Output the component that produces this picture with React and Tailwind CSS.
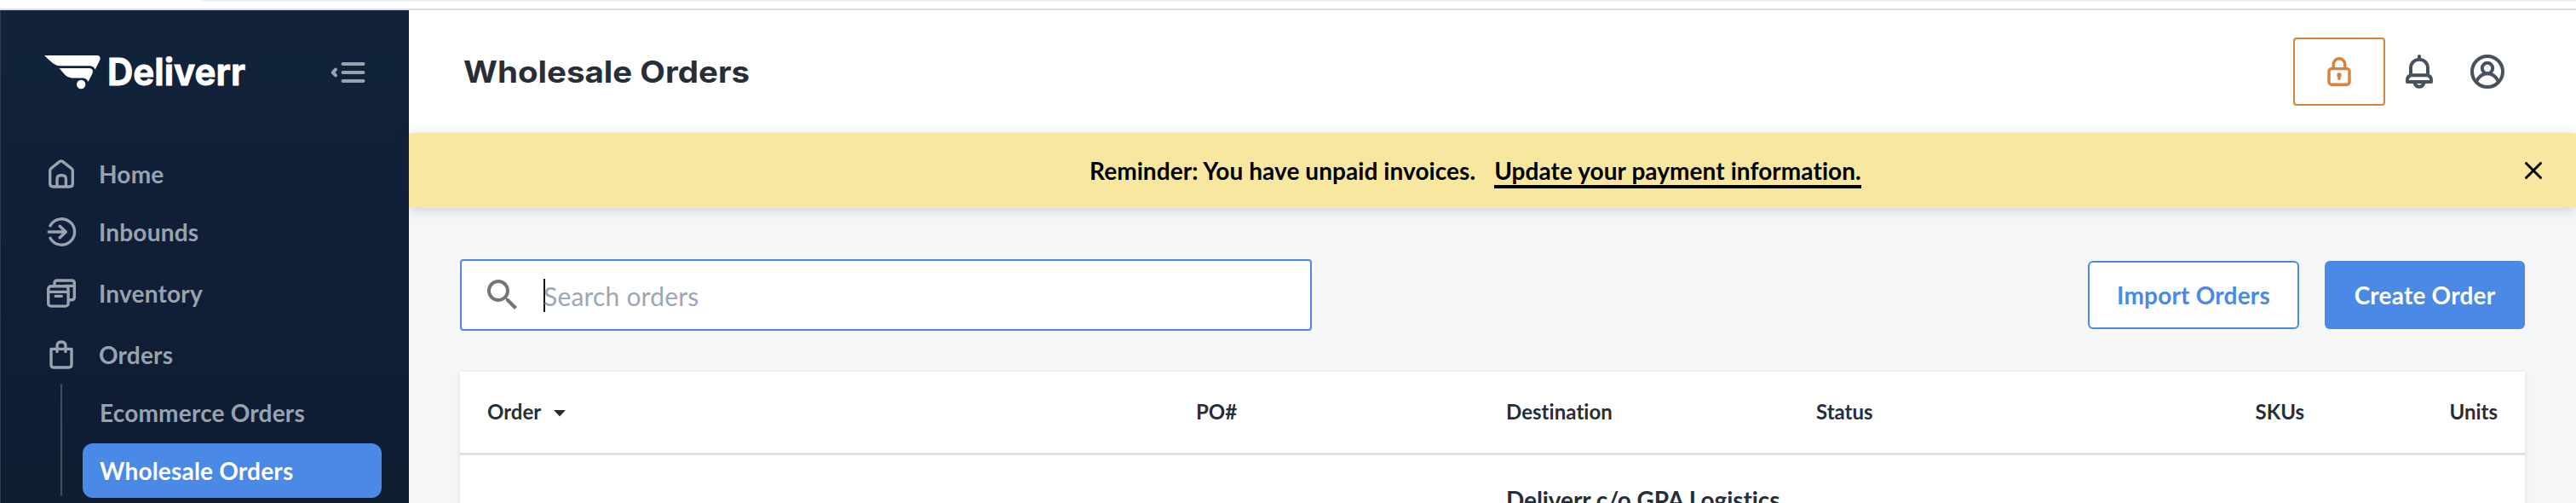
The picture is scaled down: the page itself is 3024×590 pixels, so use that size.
import React from 'react';

function Logo() {
    return (
        <svg className="overflow-visible" width="240" height="60" viewBox="0 -8 240 60" fill="#ffffff">
            <path d="M0 2H62Q66 2.2 65.6 6.5Q65.2 8 59.7 18.5Q58 14.6 54 14.2H19Q14 14.2 10.5 11.5Q6 8 0 2Z" />
            <path d="M17.5 17H53Q57.5 17.6 56.8 22Q56 24.5 51.5 33Q50 29 46 28.5H32Q27.5 28.2 24.5 25Z" />
            <circle cx="43.2" cy="36" r="5.2" />
            <text
                x="74"
                y="37"
                fontSize="44"
                fontWeight="700"
                fontFamily="Inter, sans-serif"
                textLength="162"
                lengthAdjust="spacingAndGlyphs"
                stroke="#ffffff"
                strokeWidth="0.8"
            >
                Deliverr
            </text>
        </svg>
    );
}

function NavIcon({ children }) {
    return (
        <svg
            className="h-10 w-10 shrink-0"
            viewBox="0 0 40 40"
            fill="none"
            stroke="currentColor"
            strokeWidth="3.4"
            strokeLinecap="round"
            strokeLinejoin="round"
        >
            {children}
        </svg>
    );
}

const navItems = [
    {
        label: 'Home',
        icon: (
            <>
                <path d="M6.7 16.2Q6.7 14.6 8 13.5L17.8 5.6Q19.8 4.2 21.8 5.6L31.8 13.5Q33.3 14.6 33.3 16.2V31.5Q33.3 35 29.8 35H10.2Q6.7 35 6.7 31.5Z" />
                <path d="M15 34.5V26Q15 21.7 19 21.7H21.2Q25.4 21.7 25.4 26V34.5" />
            </>
        ),
    },
    {
        label: 'Inbounds',
        icon: (
            <>
                <path d="M7 12.8A15.2 15.2 0 1 1 7 27.2" />
                <path d="M5.2 20H25M18.2 13.2L25.3 20L18.2 26.8" />
            </>
        ),
    },
    {
        label: 'Inventory',
        icon: (
            <>
                <rect x="4.7" y="11.7" width="23.4" height="23.4" rx="3.2" />
                <path d="M4.7 18.4H28M13.2 23.4H20.2" />
                <path d="M12 11V8Q12 5 15 5H32.2Q35.3 5 35.3 8V24.5Q35.3 27.8 31.5 27.8H28.5M25 11.4H35" />
            </>
        ),
    },
    {
        label: 'Orders',
        icon: (
            <>
                <path d="M8 13.4H32V31.8Q32 35 28.8 35H11.2Q8 35 8 31.8Z" />
                <path d="M15 16.5V10Q15 5 20 5Q25 5 25 10V16.5" />
            </>
        ),
    },
];

function Sidebar() {
    return (
        <aside className="w-[480px] shrink-0 border-l border-[#2b3b50] bg-linear-to-b from-[#11233b] via-[#101e37] to-[#0f1d33] font-bold text-[#98a3af]">
            <div className="flex h-[144px] items-center pt-px pr-[51px] pl-[51px]">
                <Logo />
                <svg
                    className="ml-auto"
                    width="42"
                    height="26"
                    viewBox="0 0 42 26"
                    fill="none"
                    stroke="currentColor"
                    strokeWidth="4"
                    strokeLinecap="round"
                    strokeLinejoin="round"
                >
                    <path d="M15.5 3H39.5M15.5 13H39.5M15.5 23H39.5M7 9.7L3.7 13L7 16.3" />
                </svg>
            </div>

            <nav className="pt-[14px] pl-[51px] text-[28px] leading-[68px] tracking-[0.2px]">
                {navItems.map((item, i) => (
                    <div key={item.label} className={i > 1 ? 'mt-1 flex h-[68px] items-center' : 'flex h-[68px] items-center'}>
                        <NavIcon>{item.icon}</NavIcon>
                        <span className="ml-6">{item.label}</span>
                    </div>
                ))}

                {/* Orders submenu */}
                <div className="mt-[2px] ml-[19px] h-[132px] border-l-2 border-[#414c5e] pr-8 pl-6 text-[28px]">
                    <div className="-mt-[2px] pl-5">Ecommerce Orders</div>
                    <div className="mt-[2px] h-16 rounded-xl bg-[#4a89e6] pl-5 leading-[64px] text-white">
                        Wholesale Orders
                    </div>
                </div>
            </nav>
        </aside>
    );
}

function Header() {
    return (
        <header className="flex h-[144px] items-center bg-white pr-[84px] pl-16">
            <h1 className="origin-left scale-x-110 font-[Inter,sans-serif] text-[35px] font-bold text-[#272e37]">
                Wholesale Orders
            </h1>
            <div className="ml-auto flex items-center text-[#48525f]">
                <button className="flex h-20 w-[108px] items-center justify-center rounded border-2 border-[#d98138] text-[#d98138]">
                    <svg width="28" height="34" viewBox="0 0 28 34" fill="none" stroke="currentColor" strokeWidth="3.4">
                        <rect x="2" y="13.6" width="24" height="18.6" rx="3" />
                        <path d="M7.2 13V8.5A6.8 6.8 0 0 1 20.8 8.5V13" />
                        <circle cx="14" cy="21" r="2.7" fill="currentColor" stroke="none" />
                        <path d="M14 21V25.2" strokeLinecap="round" />
                    </svg>
                </button>
                <svg className="ml-6" width="32" height="40" viewBox="0 0 32 40" fill="none" stroke="currentColor" strokeWidth="4" strokeLinejoin="round">
                    <path d="M16 2V5" strokeLinecap="round" />
                    <path d="M6 24V15.7A10 10 0 0 1 26 15.7V24" />
                    <path d="M6 24.3H26Q30 25.5 30 29.5V32H2V29.5Q2 25.5 6 24.3Z" />
                    <path d="M10.3 33Q12 37.8 16 37.8Q20 37.8 21.7 33" />
                </svg>
                <svg className="ml-11" width="40" height="40" viewBox="0 0 40 40" fill="none" stroke="currentColor" strokeWidth="4">
                    <circle cx="20" cy="20" r="18" />
                    <circle cx="20" cy="16" r="6.2" />
                    <path d="M7 31.5Q12 22.2 20 22.2Q28 22.2 33 31.5" />
                </svg>
            </div>
        </header>
    );
}

function Banner() {
    return (
        <div className="relative flex h-[88px] items-center rounded bg-[#f8e89f] pr-10 pl-[799px] text-[28px] font-bold tracking-[0.07px] text-black shadow-[0_2px_14px_rgba(40,60,110,0.2)]">
            <span>Reminder: You have unpaid invoices.</span>
            <a className="mt-1 ml-[22px] border-b-4 border-black leading-[34px]">Update your payment information.</a>
            <svg className="ml-auto" width="20" height="20" viewBox="0 0 20 20" stroke="#000000" strokeWidth="3" strokeLinecap="round">
                <path d="M1.5 1.5L18.5 18.5M18.5 1.5L1.5 18.5" />
            </svg>
        </div>
    );
}

function Toolbar() {
    return (
        <div className="flex h-[84px] items-center text-[28px] font-bold tracking-[0.2px]">
            <div className="flex h-[84px] w-[1000px] items-center rounded border-2 border-[#4a89e6] bg-white pl-6">
                <svg width="48" height="48" viewBox="0 0 24 24" fill="#757575">
                    <path d="M15.5 14h-.79l-.28-.27C15.41 12.59 16 11.11 16 9.5 16 5.91 13.09 3 9.5 3S3 5.91 3 9.5 5.91 16 9.5 16c1.61 0 3.09-.59 4.23-1.57l.27.28v.79l5 4.99L20.49 19l-4.99-5zm-6 0C7.01 14 5 11.99 5 9.5S7.01 5 9.5 5 14 7.01 14 9.5 11.99 14 9.5 14z" />
                </svg>
                <span className="ml-6 h-[39px] w-[2px] bg-[#101418]"></span>
                <span className="-ml-[2px] pt-[3px] text-[30px] font-normal text-[#9ba7b6]">Search orders</span>
            </div>
            <button className="ml-auto h-20 w-[248px] rounded-md border-2 border-[#4a89e6] bg-white text-[#4a89e6]">
                Import Orders
            </button>
            <button className="ml-[30px] h-20 w-[235px] rounded-md bg-[#4a89e6] text-white">Create Order</button>
        </div>
    );
}

function OrdersTable() {
    return (
        <div className="mt-12 h-[160px] bg-white text-[24px] font-bold text-[#272e37] shadow-[0_1px_5px_rgba(0,0,0,0.12)]">
            <div className="grid h-[98px] grid-cols-[832px_364px_364px_364px_273px_227px] items-center border-b-[3px] border-[#dde1e8] pb-[2px]">
                <div className="flex items-center pl-8">
                    Order
                    <svg className="mt-1 ml-[15px]" width="14" height="8" viewBox="0 0 14 8" fill="currentColor">
                        <path d="M0 0H14L7 7.5Z" />
                    </svg>
                </div>
                <div className="pl-8">PO#</div>
                <div className="pl-8 tracking-[0.05px]">Destination</div>
                <div className="pl-8">Status</div>
                <div className="pr-8 text-right">SKUs</div>
                <div className="pr-8 text-right">Units</div>
            </div>
            <div className="pt-[35px] pl-[1228px] text-[28px] leading-[34px] tracking-[-0.08px]">Deliverr c/o GPA Logistics</div>
        </div>
    );
}

export default function App() {
    return (
        <div className="h-[590px] w-[3024px] overflow-hidden bg-[#f4f6f8] font-[Lato,sans-serif]">
            {/* Bottom edge of the browser toolbar */}
            <div className="h-3 border-b-2 border-[#dcdcdc] bg-white pl-[236px]">
                <div className="h-[2px] rounded-bl-sm bg-[#f2f2f2]"></div>
            </div>

            <div className="flex h-[578px]">
                <Sidebar />
                <div className="flex-1">
                    <Header />
                    <Banner />
                    <main className="pt-[60px] pr-[60px] pl-[60px]">
                        <Toolbar />
                        <OrdersTable />
                    </main>
                </div>
            </div>
        </div>
    );
}
